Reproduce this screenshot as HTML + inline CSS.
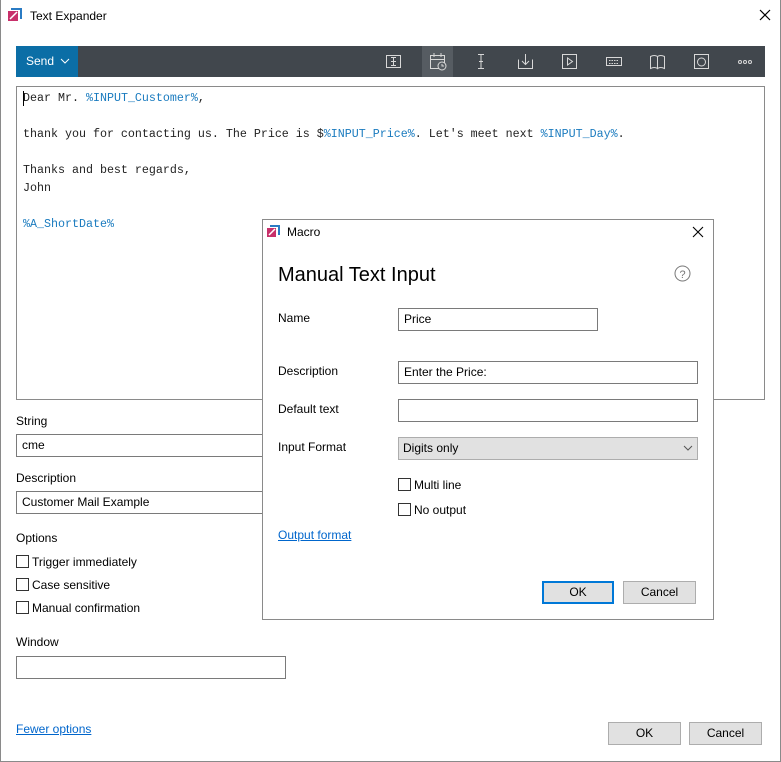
<!DOCTYPE html>
<html><head><meta charset="utf-8"><style>
*{box-sizing:border-box;margin:0;padding:0}
body{width:781px;height:762px;position:relative;background:#fff;font-family:"Liberation Sans",sans-serif;font-size:12px;color:#000;overflow:hidden}
.a{position:absolute}
.win{left:0;top:0;width:781px;height:762px;border:1px solid #8a8a8a;border-top:none}
.lbl{position:absolute;line-height:14px;white-space:nowrap}
.inp{position:absolute;border:1px solid #7a7a7a;background:#fff;padding-left:5px;line-height:20px;white-space:nowrap}
.cb{position:absolute;width:13px;height:13px;border:1px solid #333;background:#fff}
.btn{position:absolute;background:#e1e1e1;border:1px solid #adadad;text-align:center;line-height:20px}
.mono{position:absolute;left:23px;font-family:"Liberation Mono",monospace;font-size:11.67px;line-height:18px;white-space:pre;color:#222}
.v{color:#1a7bbf}
a{color:#0066cc;text-decoration:underline}
</style></head><body>
<div class="a win"></div>
<svg class="a" style="left:8px;top:8px" width="14" height="14"><rect x="0" y="3" width="10" height="10" fill="#c8306a"/><path d="M3 1H13V11" stroke="#2a7bc4" stroke-width="2" fill="none"/><path d="M2 11L9 4" stroke="#fff" stroke-width="1.5"/></svg>
<div class="lbl" style="left:30px;top:9px">Text Expander</div>
<svg class="a" style="left:759px;top:9px" width="12" height="12"><path d="M1 1L11 11M11 1L1 11" stroke="#000" stroke-width="1.2"/></svg>

<div class="a" style="left:16px;top:46px;width:749px;height:31px;background:#41474d"></div>
<div class="a" style="left:16px;top:46px;width:62px;height:31px;background:#0b6ea6;color:#fff;line-height:31px;padding-left:10px">Send <svg width="10" height="8" style="margin-left:3px"><path d="M1 2L5 6L9 2" stroke="#fff" fill="none"/></svg></div>
<div class="a" style="left:422px;top:46px;width:31px;height:31px;background:#565c62"></div>
<svg class="a" style="left:380px;top:46px" width="385" height="31" fill="none" stroke="#d8d8d8" stroke-width="1">
<rect x="6.5" y="9.5" width="14" height="12"/><path d="M11 11.5h5M13.5 11.5v8M11 19.5h5M11 15.5h5"/>
<rect x="50.5" y="9.5" width="14" height="13"/><path d="M50.5 13.5h14M54 7v4M61 7v4"/><circle cx="62" cy="20" r="4" fill="#565c62"/><path d="M62 18v2h2"/>
<path d="M98 8.5h6M101 8.5v14M98 22.5h6M99 15.5h4"/>
<path d="M138.5 13.5v9h14v-9M145.5 8v10M142 15l3.5 3.5 3.5-3.5"/>
<rect x="182.5" y="8.5" width="14" height="14"/><path d="M187.5 12v7l5-3.5z"/>
<rect x="226.5" y="11.5" width="15" height="8"/><path d="M229 14.5h10M229 17.5h10" stroke-dasharray="1.5 1"/>
<path d="M270.5 10.5q4-2 7 0v12q-3-2-7 0zM277.5 10.5q3-2 7 0v12q-4-2-7 0z"/>
<rect x="314.5" y="8.5" width="14" height="14"/><circle cx="321.5" cy="16" r="4"/>
<circle cx="360" cy="16" r="1.5"/><circle cx="365" cy="16" r="1.5"/><circle cx="370" cy="16" r="1.5"/>
</svg>

<div class="a" style="left:16px;top:86px;width:749px;height:314px;border:1px solid #8a8a8a"></div>
<div class="a" style="left:23px;top:91px;width:1px;height:15px;background:#000"></div>
<div class="mono" style="top:89px">Dear Mr. <span class="v">%INPUT_Customer%</span>,</div>
<div class="mono" style="top:125px">thank you for contacting us. The Price is $<span class="v">%INPUT_Price%</span>. Let's meet next <span class="v">%INPUT_Day%</span>.</div>
<div class="mono" style="top:161px">Thanks and best regards,</div>
<div class="mono" style="top:179px">John</div>
<div class="mono" style="top:215px"><span class="v">%A_ShortDate%</span></div>

<div class="lbl" style="left:16px;top:414px">String</div>
<div class="inp" style="left:16px;top:434px;width:270px;height:23px">cme</div>
<div class="lbl" style="left:16px;top:471px">Description</div>
<div class="inp" style="left:16px;top:491px;width:270px;height:23px">Customer Mail Example</div>
<div class="lbl" style="left:16px;top:531px">Options</div>
<div class="cb" style="left:16px;top:555px"></div><div class="lbl" style="left:32px;top:555px">Trigger immediately</div>
<div class="cb" style="left:16px;top:578px"></div><div class="lbl" style="left:32px;top:578px">Case sensitive</div>
<div class="cb" style="left:16px;top:601px"></div><div class="lbl" style="left:32px;top:601px">Manual confirmation</div>
<div class="lbl" style="left:16px;top:635px">Window</div>
<div class="inp" style="left:16px;top:656px;width:270px;height:23px"></div>
<div class="lbl" style="left:16px;top:722px"><a>Fewer options</a></div>
<div class="btn" style="left:608px;top:722px;width:73px;height:23px">OK</div>
<div class="btn" style="left:689px;top:722px;width:73px;height:23px">Cancel</div>

<div class="a" style="left:262px;top:219px;width:452px;height:401px;background:#fff;border:1px solid #8a8a8a"></div>
<svg class="a" style="left:267px;top:225px" width="13" height="13"><rect x="0" y="3" width="9" height="9" fill="#c8306a"/><path d="M3 1H12V10" stroke="#2a7bc4" stroke-width="2" fill="none"/><path d="M2 10L8 4" stroke="#fff" stroke-width="1.5"/></svg>
<div class="lbl" style="left:287px;top:225px">Macro</div>
<svg class="a" style="left:692px;top:226px" width="12" height="12"><path d="M1 1L11 11M11 1L1 11" stroke="#000" stroke-width="1.1"/></svg>
<div class="lbl" style="left:278px;top:263px;font-size:20px;line-height:24px">Manual Text Input</div>
<svg class="a" style="left:674px;top:265px" width="17" height="17"><circle cx="8.5" cy="8.5" r="7.5" fill="none" stroke="#777"/><text x="8.5" y="13" font-size="11" text-anchor="middle" fill="#777" font-family="Liberation Sans">?</text></svg>
<div class="lbl" style="left:278px;top:311px">Name</div>
<div class="inp" style="left:398px;top:308px;width:200px;height:23px">Price</div>
<div class="lbl" style="left:278px;top:364px">Description</div>
<div class="inp" style="left:398px;top:361px;width:300px;height:23px">Enter the Price:</div>
<div class="lbl" style="left:278px;top:402px">Default text</div>
<div class="inp" style="left:398px;top:399px;width:300px;height:23px"></div>
<div class="lbl" style="left:278px;top:440px">Input Format</div>
<div class="inp" style="left:398px;top:437px;width:300px;height:23px;background:#e1e1e1;border-color:#adadad;padding-left:4px">Digits only</div>
<svg class="a" style="left:683px;top:445px" width="10" height="7"><path d="M1 1L5 5L9 1" stroke="#555" fill="none"/></svg>
<div class="cb" style="left:398px;top:478px"></div><div class="lbl" style="left:414px;top:478px">Multi line</div>
<div class="cb" style="left:398px;top:503px"></div><div class="lbl" style="left:414px;top:503px">No output</div>
<div class="lbl" style="left:278px;top:528px"><a>Output format</a></div>
<div class="btn" style="left:542px;top:581px;width:72px;height:23px;border:2px solid #0078d7;line-height:19px">OK</div>
<div class="btn" style="left:623px;top:581px;width:73px;height:23px">Cancel</div>
</body></html>
